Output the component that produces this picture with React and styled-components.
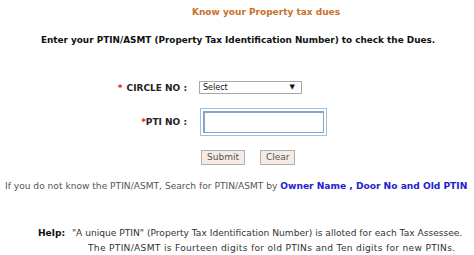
import React from "react";
import styled, { createGlobalStyle } from "styled-components";

const GlobalStyle = createGlobalStyle`
    body {
        margin: 0;
        background: #ffffff;
        font-family: "DejaVu Sans", Verdana, sans-serif;
    }
`

const Page = styled.div`
    width: 474px;
    height: 255px;
    overflow: hidden;
    display: flex;
    flex-direction: column;
`

const Title = styled.div`
    margin-top: 6px;
    padding-left: 58px;
    text-align: center;
    font-size: 9px;
    font-weight: bold;
    color: #c8702c;
    line-height: 12px;
`

const Intro = styled.div`
    margin-top: 16px;
    text-align: center;
    padding-left: 2px;
    font-size: 8.9px;
    font-weight: bold;
    color: #111;
    line-height: 12px;
`

const Form = styled.div`
    margin-top: 35px;
    display: grid;
    grid-template-columns: 187px auto;
    column-gap: 12px;
    row-gap: 14px;
    align-items: center;
`

const Label = styled.div`
    text-align: right;
    font-size: 9px;
    font-weight: bold;
    color: #222;
    white-space: pre;
`

const Star = styled.span`
    color: #e02020;
    margin-right: ${p => p.$gap || 0}px;
`

const SelectBox = styled.div`
    position: relative;
    width: 98px;
    height: 11px;
    border: 1px solid #a8a8a8;
    background: #fff;
    font-size: 8px;
    line-height: 11px;
    padding-left: 3px;
    color: #111;
    box-sizing: content-box;
    &::after {
        content: "▼";
        position: absolute;
        right: 6px;
        top: 0;
        font-size: 7px;
        color: #111;
    }
`

const TextInput = styled.input`
    margin: 3px 0 3px 4px;
    width: 118px;
    height: 19px;
    padding: 0;
    border: 1px solid #8aa4c0;
    border-left-width: 2px;
    border-top-width: 2px;
    outline: 1px solid #9cc0e0;
    outline-offset: 2px;
    box-sizing: content-box;
    background: #fff;
`

const Buttons = styled.div`
    grid-column: 2;
    display: flex;
    gap: 15px;
    margin-left: 2px;
    margin-top: 0px;
`

const Button = styled.button`
    height: 15px;
    padding: 0 5px;
    font-family: "DejaVu Sans", Verdana, sans-serif;
    font-size: 9px;
    color: #555;
    background: #f5ebe4;
    border: 1px solid #b0b0b0;
    line-height: 13px;
`

const SearchLine = styled.div`
    margin-top: 15px;
    padding-left: 5px;
    font-size: 9.1px;
    color: #555;
    line-height: 12px;
    white-space: nowrap;
`

const Link = styled.a`
    color: #2222cc;
    font-weight: bold;
    text-decoration: none;
`

const Help = styled.div`
    margin-top: 34px;
    padding-left: 38px;
    font-size: 9.1px;
    color: #333;
    line-height: 15px;
    white-space: nowrap;
`

const HelpLabel = styled.span`
    font-weight: bold;
    color: #111;
    margin-right: 4px;
`

const HelpSecond = styled.div`
    padding-left: 50px;
    letter-spacing: 0.3px;
`

export default function App() {
    return (
        <Page>
            <GlobalStyle />
            <Title>Know your Property tax dues</Title>
            <Intro>Enter your PTIN/ASMT (Property Tax Identification Number) to check the Dues.</Intro>
            <Form>
                <Label><Star $gap={4}>*</Star>CIRCLE NO :</Label>
                <SelectBox>Select</SelectBox>
                <Label><Star>*</Star>PTI NO :</Label>
                <TextInput type="text" />
                <Buttons>
                    <Button>Submit</Button>
                    <Button>Clear</Button>
                </Buttons>
            </Form>
            <SearchLine>
                If you do not know the PTIN/ASMT, Search for PTIN/ASMT by <Link href="#">Owner Name , Door No and Old PTIN</Link>
            </SearchLine>
            <Help>
                <HelpLabel>Help:</HelpLabel> "A unique PTIN" (Property Tax Identification Number) is alloted for each Tax Assessee.
                <HelpSecond>The PTIN/ASMT is Fourteen digits for old PTINs and Ten digits for new PTINs.</HelpSecond>
            </Help>
        </Page>
    );
}
